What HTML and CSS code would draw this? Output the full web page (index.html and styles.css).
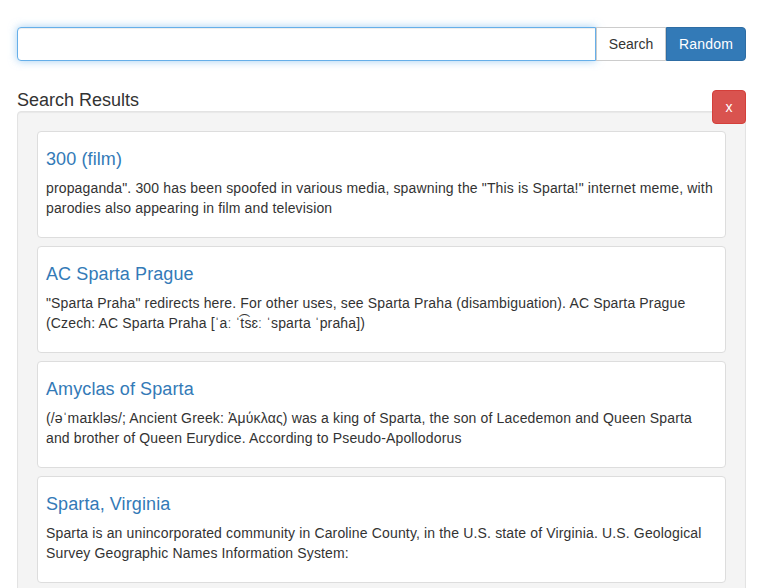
FILE: index.html
```html
<!DOCTYPE html>
<html lang="en">
<head>
<meta charset="utf-8">
<title>Wikipedia Viewer</title>
<link rel="stylesheet" href="styles.css">
</head>
<body>
<div class="page">
  <form class="search-row">
    <input class="search-input" type="text" aria-label="Search">
    <button class="btn btn-default" type="button">Search</button>
    <button class="btn btn-primary" type="button">Random</button>
  </form>

  <div class="results-head">
    <h4 class="results-title">Search Results</h4>
    <button class="btn btn-danger" type="button">x</button>
  </div>

  <div class="well">
    <div class="card">
      <h4 class="card-title">300 (film)</h4>
      <p class="card-text">propaganda". 300 has been spoofed in various media, spawning the "This is Sparta!" internet meme, with parodies also appearing in film and television</p>
    </div>
    <div class="card">
      <h4 class="card-title">AC Sparta Prague</h4>
      <p class="card-text">"Sparta Praha" redirects here. For other uses, see Sparta Praha (disambiguation). AC Sparta Prague (Czech: AC Sparta Praha [ˈaː ˈt͡sɛː ˈsparta ˈpraɦa])</p>
    </div>
    <div class="card">
      <h4 class="card-title">Amyclas of Sparta</h4>
      <p class="card-text">(/əˈmaɪkləs/; Ancient Greek: Ἀμύκλας) was a king of Sparta, the son of Lacedemon and Queen Sparta and brother of Queen Eurydice. According to Pseudo-Apollodorus</p>
    </div>
    <div class="card">
      <h4 class="card-title">Sparta, Virginia</h4>
      <p class="card-text">Sparta is an unincorporated community in Caroline County, in the U.S. state of Virginia. U.S. Geological Survey Geographic Names Information System:</p>
    </div>
  </div>
</div>
</body>
</html>
```

FILE: styles.css
```css
* {
  box-sizing: border-box;
}

html, body {
  margin: 0;
  background: #fff;
}

body {
  font-family: "Liberation Sans", Arial, "DejaVu Sans", sans-serif;
  font-size: 14px;
  line-height: 20px;
  color: #333;
}

.page {
  padding: 27px 17px 0;
}

.search-row {
  display: flex;
  height: 34px;
  margin: 0;
}

.search-input {
  flex: 1;
  height: 34px;
  padding: 6px 12px;
  font: inherit;
  color: #555;
  background: #fff;
  border: 1px solid #66afe9;
  border-radius: 4px 0 0 4px;
  box-shadow: inset 0 1px 1px rgba(0, 0, 0, .075), 0 0 8px rgba(102, 175, 233, .6);
  outline: none;
}

.btn {
  font-family: inherit;
  font-size: 14px;
  line-height: 20px;
  height: 34px;
  padding: 6px 12px;
  border: 1px solid transparent;
  border-radius: 4px;
  cursor: pointer;
  white-space: nowrap;
}

.btn-default {
  color: #333;
  background: #fff;
  border-color: #ccc;
  border-radius: 0;
  width: 70px;
  padding: 6px 0;
}

.btn-primary {
  color: #fff;
  background: #337ab7;
  border-color: #2e6da4;
  border-radius: 0 4px 4px 0;
  width: 80px;
  padding: 6px 0;
  letter-spacing: 0.2px;
}

.btn-danger {
  color: #fff;
  background: #d9534f;
  border-color: #d43f3a;
  width: 34px;
  padding: 6px 0;
  margin-bottom: -13px;
  position: relative;
  z-index: 1;
}

.results-head {
  display: flex;
  justify-content: space-between;
  align-items: flex-start;
  margin-top: 29px;
}

.results-title {
  margin: 0;
  font-size: 18px;
  line-height: 21px;
  font-weight: 500;
  color: #333;
}

.well {
  background: #f4f4f4;
  border: 1px solid #e3e3e3;
  border-radius: 4px;
  padding: 19px;
  box-shadow: inset 0 1px 1px rgba(0, 0, 0, .05);
}

.card {
  background: #fff;
  border: 1px solid #ddd;
  border-radius: 4px;
  padding: 8px;
  margin-bottom: 8px;
}

.card-title {
  margin: 9px 0 9px;
  font-size: 18px;
  line-height: 20px;
  font-weight: 500;
  color: #337ab7;
  letter-spacing: 0.1px;
}

.card-text {
  margin: 0 0 11px;
  color: #333;
  letter-spacing: 0.15px;
}
```
